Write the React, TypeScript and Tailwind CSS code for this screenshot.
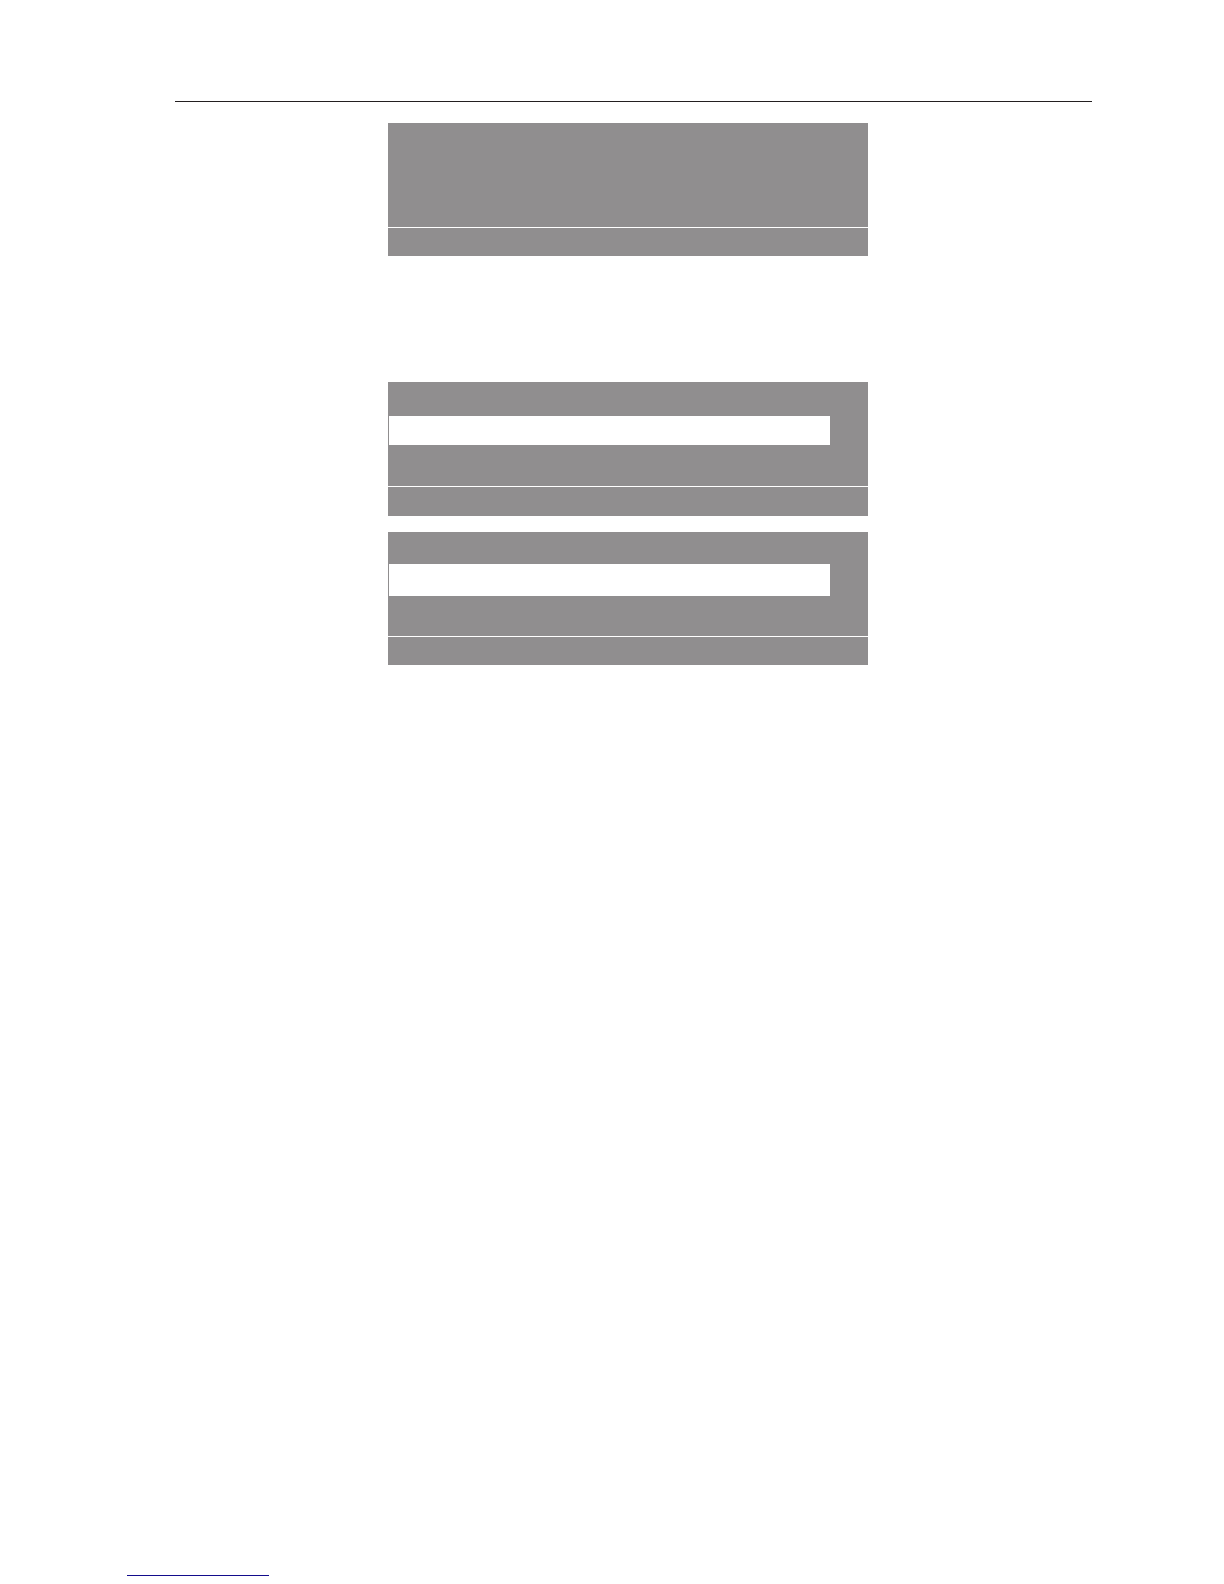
import clsx from "clsx";

type Highlight = "short" | "tall";

function DisplayPanel({ highlight, className }: { highlight?: Highlight; className?: string }) {
  return (
    <section className={clsx("w-full max-w-[480px]", className)}>
      <div
        className={clsx(
          "bg-[#908e8f] pl-px pr-[38px]",
          !highlight && "h-[104px]",
          highlight === "short" && "pt-[34px] pb-[41px]",
          highlight === "tall" && "pt-8 pb-10"
        )}
      >
        {/* Selected row */}
        {highlight && (
          <div className={clsx("bg-white", highlight === "short" ? "h-[29px]" : "h-8")} />
        )}
      </div>
      {/* Softkey bar */}
      <div className={clsx("mt-px bg-[#908e8f]", highlight === "short" ? "h-[29px]" : "h-7")} />
    </section>
  );
}

export default function App() {
  return (
    <div className="min-h-screen flex flex-col bg-white">
      <main className="pl-[175px] pr-[132px] pt-[101px]">
        <hr className="border-t border-[#231f20]" />
        <div className="flex flex-col pl-[213px] pt-[21px]">
          <DisplayPanel />
          <DisplayPanel highlight="short" className="mt-[126px]" />
          <DisplayPanel highlight="tall" className="mt-4" />
        </div>
      </main>
      <footer className="mt-auto pl-[127px] pb-2">
        <div className="w-[142px] border-b border-[#130c8c]" />
      </footer>
    </div>
  );
}
